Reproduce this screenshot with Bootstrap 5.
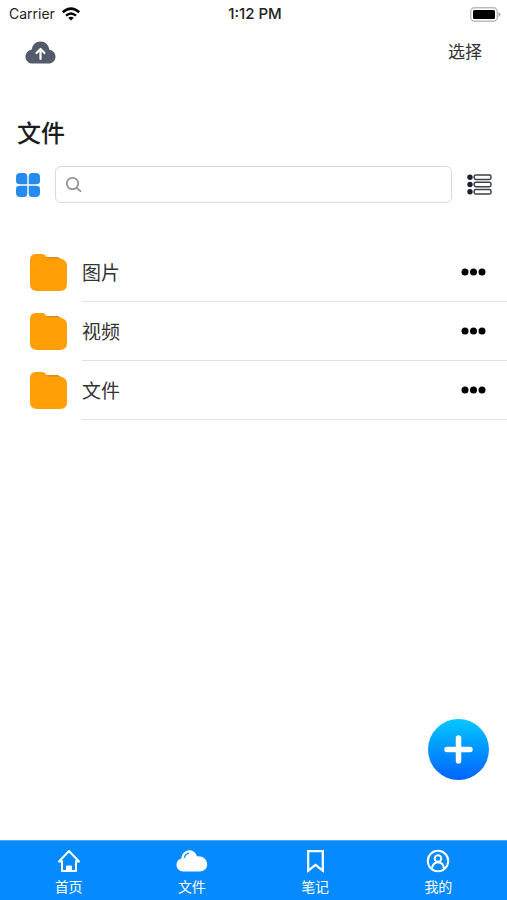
<!DOCTYPE html>
<html lang="zh-CN">
<head>
<meta charset="utf-8">
<meta name="viewport" content="width=device-width, initial-scale=1">
<title>文件</title>
<link href="https://cdn.jsdelivr.net/npm/bootstrap@5.3.0/dist/css/bootstrap.min.css" rel="stylesheet">
<style>
  body { font-family: Inter, "Noto Sans CJK SC", sans-serif; color: #222; background: #fff; }
  svg { display: block; flex: none; }
  .status { height: 28px; padding: 0 6px 0 9px; font-size: 14px; line-height: 20px; }
  .status .carrier { gap: 6px; }
  .status .clock { font-weight: 500; font-size: 15px; }
  .toolbar { height: 48px; padding: 0 25px; }
  .plain { background: none; border: 0; padding: 0; color: inherit; }
  .select-btn { font-size: 17px; line-height: 24px; color: #333; }
  .page-title { font-size: 24px; line-height: 36px; font-weight: 500; margin: 40px 17px 0; color: #1c1c1e; }
  .search-row { gap: 15px; padding: 0 15px 0 16px; margin-top: 14px; }
  .search-box { height: 37px; border: 1px solid #d9d9d9; border-radius: 6px; padding: 0 9px; gap: 8px; }
  .search-box input { font-size: 16px; }
  .search-box input:focus { box-shadow: none; }
  .files { margin-top: 40px; }
  .file-row { padding-left: 30px; gap: 15px; }
  .file-line { height: 59px; padding-right: 21px; border-bottom: 1px solid #e2e2e2; }
  .file-name { font-size: 19px; line-height: 28px; padding-top: 3px; color: #333; text-decoration: none; }
  .fab { right: 18px; bottom: 120px; width: 61px; height: 61px; background: linear-gradient(#04c8fe, #0062ff); }
  .tabs { height: 60px; padding: 0 7px; background: #058aff; border-top: 1px solid #4ba6f5; }
  .tabs a { color: #fff; font-size: 14px; line-height: 20px; padding-top: 8px; gap: 4px; }
</style>
<script src="https://cdn.jsdelivr.net/npm/bootstrap@5.3.0/dist/js/bootstrap.bundle.min.js" defer></script>
</head>
<body class="d-flex flex-column min-vh-100">
<svg class="d-none" aria-hidden="true">
  <symbol id="folder" viewBox="0 0 37 37">
    <path d="M14 3h14l6 4v5H14z" fill="#d98a1c"/>
    <path d="M6 0h6q2.500 0 3.700 1.800l.8 1.200Q17.300 4.500 19 4.500h11Q37 6 37 11.500V30q0 7-7 7H7q-7 0-7-7V6q0-6 6-6z" fill="#ff9f05"/>
  </symbol>
  <symbol id="dots" viewBox="0 0 25 8">
    <circle cx="4" cy="4" r="3.500"/><circle cx="12.500" cy="4" r="3.500"/><circle cx="21" cy="4" r="3.500"/>
  </symbol>
</svg>

<div class="status row g-0 align-items-center">
  <div class="carrier col d-flex align-items-center">
    <span>Carrier</span>
    <svg width="20" height="14" viewBox="0 0 20 14" fill="none" stroke="#000" stroke-width="2.500"><path d="M1.800 5.300q8.200-7.400 16.400 0M5 8.600q5-4.300 10 0"/><path d="M10 13.500 7.200 10.800q2.800-2.200 5.600 0z" fill="#000" stroke="none"/></svg>
  </div>
  <div class="col-auto clock">1:12 PM</div>
  <div class="col d-flex justify-content-end">
    <svg width="31" height="15" viewBox="0 0 31 15"><rect x=".7" y=".7" width="26.600" height="13.600" rx="4" fill="#fff" stroke="#bbb" stroke-width="1.400"/><rect x="3" y="3" width="22" height="9" rx="1.500"/><path d="M28.500 5q2 1 2 2.500t-2 2.500z" fill="#aaa"/></svg>
  </div>
</div>

<header class="toolbar d-flex justify-content-between align-items-center">
  <button class="plain" type="button" aria-label="上传">
    <svg width="31" height="23" viewBox="0 0 31 23"><path d="M7.500 22.500C3.500 22.500.5 19.500.5 15.700c0-3.700 2.600-6.600 6.200-7C7.200 4 10.800.5 15.500.5s8.300 3.500 8.800 8.200c3.600.4 6.200 3.300 6.200 7 0 3.800-3 6.800-7 6.800z" fill="#535b6a"/><path d="M15.500 18V8.500M11.500 12l4-4 4 4" fill="none" stroke="#fff" stroke-width="2.200" stroke-linecap="round" stroke-linejoin="round"/></svg>
  </button>
  <button class="plain select-btn" type="button">选择</button>
</header>

<main>
  <h1 class="page-title">文件</h1>
  <div class="search-row d-flex align-items-center">
    <button class="plain" type="button" aria-label="网格视图">
      <svg width="24" height="24" viewBox="0 0 24 24" fill="#268bed"><path d="M4 0h4q3.300 0 3.300 4v7.300H4Q0 11.300 0 8V4q0-4 4-4zM16 0h4q4 0 4 4v4q0 3.300-4 3.300h-7.300V4q0-4 3.300-4zM4 12.700h7.300V20q0 4-3.300 4H4q-4 0-4-4v-4q0-3.300 4-3.300zM12.700 12.700H20q4 0 4 3.300v4q0 4-4 4h-4q-3.300 0-3.300-4z"/></svg>
    </button>
    <div class="search-box d-flex align-items-center flex-grow-1">
      <svg width="17" height="17" viewBox="0 0 17 17" fill="none" stroke="#929292" stroke-width="1.700" stroke-linecap="round"><circle cx="7.500" cy="7.500" r="5.700"/><path d="m11.800 11.800 3.700 3.400"/></svg>
      <input class="form-control border-0 p-0 bg-transparent" type="search" aria-label="搜索">
    </div>
    <button class="plain" type="button" aria-label="列表视图">
      <svg width="25" height="21" viewBox="0 0 25 21" fill="#1b2030"><circle cx="3" cy="3.200" r="2.700"/><circle cx="3" cy="10.500" r="2.700"/><circle cx="3" cy="17.800" r="2.700"/><g fill="#fff" stroke="#3b404b" stroke-width="1.500"><rect x="7.200" y="1" width="16.800" height="4.400" rx="1.600"/><rect x="7.200" y="8.300" width="16.800" height="4.400" rx="1.600"/><rect x="7.200" y="15.600" width="16.800" height="4.400" rx="1.600"/></g></svg>
    </button>
  </div>

  <ul class="files list-unstyled mb-0">
    <li class="file-row d-flex align-items-center">
      <svg width="37" height="37"><use href="#folder"/></svg>
      <div class="file-line d-flex flex-grow-1 align-items-center justify-content-between">
        <a class="file-name" href="#">图片</a>
        <button class="plain" type="button" aria-label="更多"><svg width="25" height="8"><use href="#dots"/></svg></button>
      </div>
    </li>
    <li class="file-row d-flex align-items-center">
      <svg width="37" height="37"><use href="#folder"/></svg>
      <div class="file-line d-flex flex-grow-1 align-items-center justify-content-between">
        <a class="file-name" href="#">视频</a>
        <button class="plain" type="button" aria-label="更多"><svg width="25" height="8"><use href="#dots"/></svg></button>
      </div>
    </li>
    <li class="file-row d-flex align-items-center">
      <svg width="37" height="37"><use href="#folder"/></svg>
      <div class="file-line d-flex flex-grow-1 align-items-center justify-content-between">
        <a class="file-name" href="#">文件</a>
        <button class="plain" type="button" aria-label="更多"><svg width="25" height="8"><use href="#dots"/></svg></button>
      </div>
    </li>
  </ul>
</main>

<button class="fab plain position-fixed rounded-circle d-flex align-items-center justify-content-center" type="button" aria-label="新建">
  <svg width="29" height="29" viewBox="0 0 29 29" stroke="#fff" stroke-width="5.500" stroke-linecap="round"><path d="M14.500 3v23M3 14.500h23"/></svg>
</button>

<nav class="tabs sticky-bottom mt-auto d-flex" aria-label="主导航">
  <a class="col d-flex flex-column align-items-center text-decoration-none" href="#">
    <svg width="24" height="24" viewBox="0 0 24 24" fill="none" stroke="#fff" stroke-width="2" stroke-linejoin="round" stroke-linecap="round"><path d="M5 12v10h14V12M2 12.500 12 2l10 10.500h-3M2 12.500h3"/><path d="M10 22v-4.500h4V22z" fill="#fff"/></svg>
    <span>首页</span>
  </a>
  <a class="col d-flex flex-column align-items-center text-decoration-none" href="#" aria-current="page">
    <svg width="32" height="24" viewBox="0 0 32 24"><path d="M7.300 22.500C3.500 22.500.5 19.600.5 15.800c0-3.200 2-5.600 4.900-6.300C5.600 4.800 8.900 1.200 13.300 1.200c3.800 0 6.700 2.500 7.700 6.200 5.500-.6 10.200 2.800 10.200 7.900 0 4.200-3.200 7.200-7.400 7.200z" fill="#fff"/><path d="M8.500 8.500q.7-3.500 4.200-4.300" fill="none" stroke="#058aff" stroke-width="1.200" stroke-linecap="round"/></svg>
    <span>文件</span>
  </a>
  <a class="col d-flex flex-column align-items-center text-decoration-none" href="#">
    <svg width="24" height="24" viewBox="0 0 24 24" fill="none" stroke="#fff" stroke-width="2.200"><path d="M5.200 2.100h14.600v19.500l-7.300-5.800-7.300 5.800z"/></svg>
    <span>笔记</span>
  </a>
  <a class="col d-flex flex-column align-items-center text-decoration-none" href="#">
    <svg width="24" height="24" viewBox="0 0 24 24" fill="none" stroke="#fff" stroke-width="2"><circle cx="12" cy="12" r="10.200"/><circle cx="12" cy="9.500" r="3.300"/><path d="M6 19.500q.5-6 6-6.300 5.500.3 6 6.300"/></svg>
    <span>我的</span>
  </a>
</nav>
</body>
</html>
